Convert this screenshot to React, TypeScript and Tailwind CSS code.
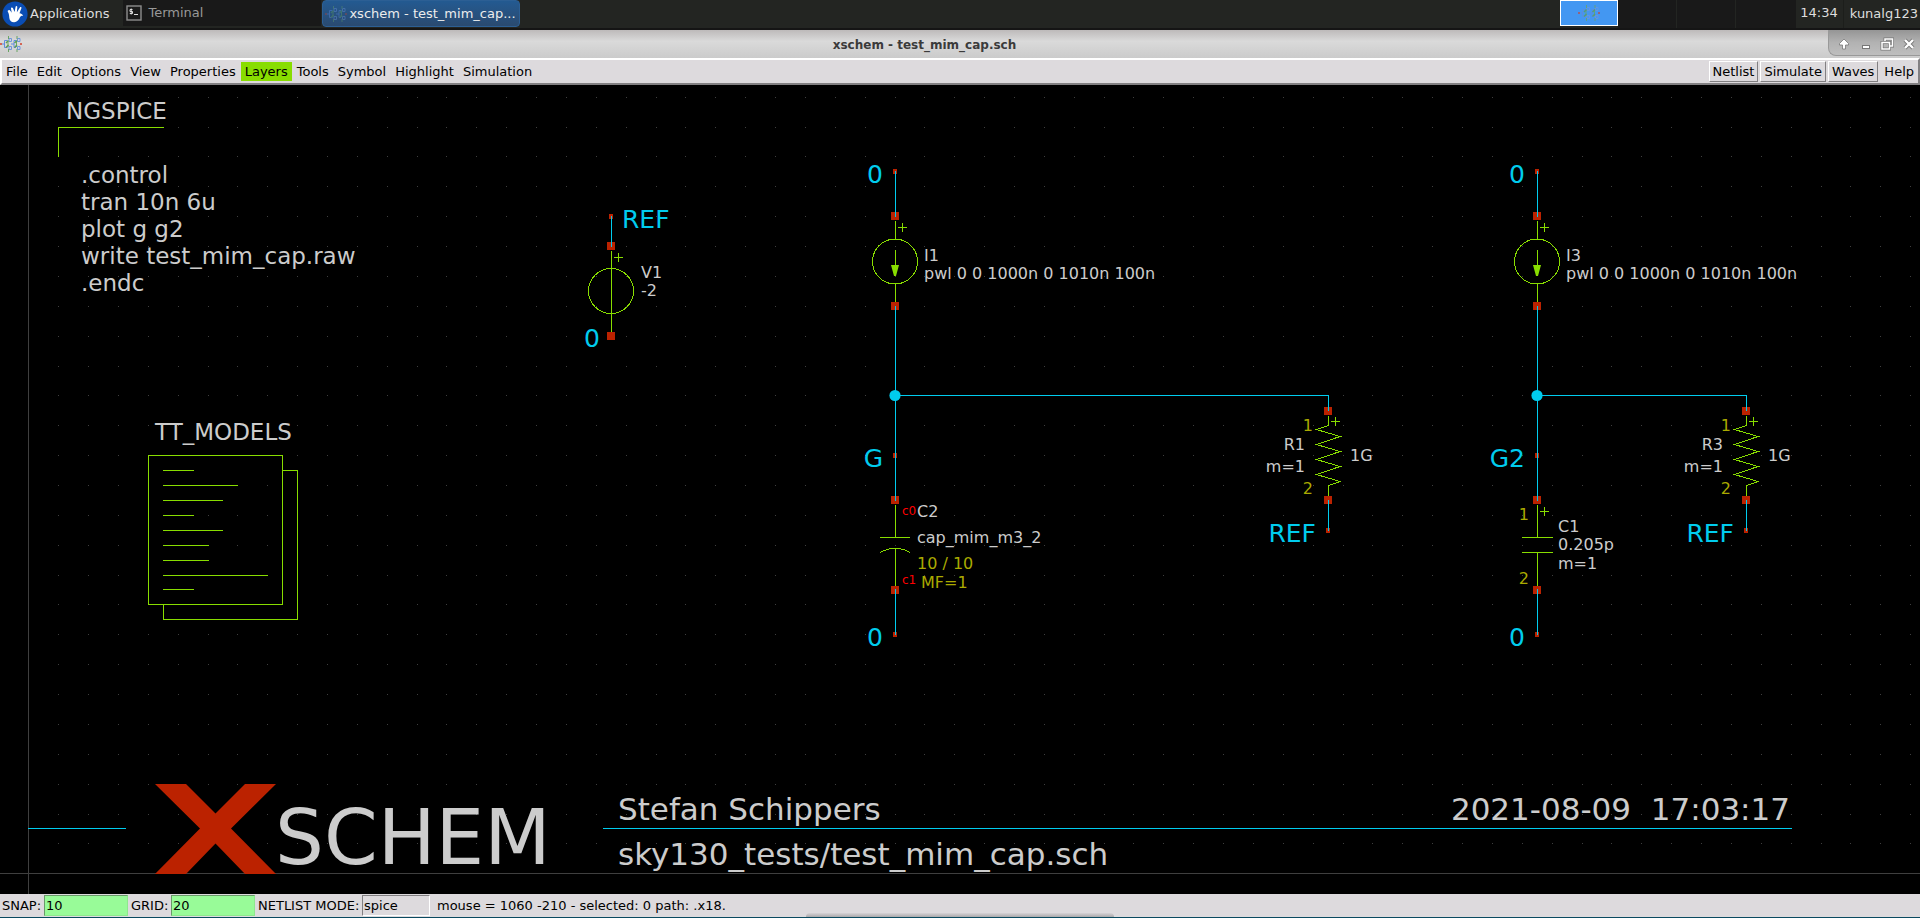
import React from "react";

const WIRE = "#00ccee";
const GRID = "#3f3f3f";
const TEXT = "#cccccc";
const SYMBOL = "#88dd00";
const PIN = "#bb2200";
const NOTE = "#aaaa00";
const PORT = "#ff0000";

const MENUS = ["File", "Edit", "Options", "View", "Properties", "Layers", "Tools", "Symbol", "Highlight", "Simulation"];
const ACTIONS = ["Netlist", "Simulate", "Waves"];

function XschemIcon({ className = "" }: { className?: string }) {
  return (
    <svg viewBox="0 0 22 16" className={`h-[16px] w-[22px] shrink-0 ${className}`} fill="none" aria-hidden="true">
      <path d="M0 8h2M20 8h2" stroke="#d0402c" strokeWidth="1.600" />
      <path d="M2 8h2M11 8h3M4.500 4.500v7M14 4.500v7M4.500 4.500h3M4.500 11.500h3M14 4.500h2M14 11.500h2" stroke="#5f8be0" strokeWidth="1" />
      <path d="M9 2.500h2.500v3H9zM9 10.500h2.500v3H9zM17.500 2.500H20v3h-2.500zM17.500 10.500H20v3h-2.500z" stroke="#6f95dd" strokeWidth="1" />
      <path d="M8.500 0v3M8.500 13v3M17 0v3M17 13v3M8 5v6M16.500 5v6" stroke="#6aa564" strokeWidth="1" />
      <path d="M6 7l2.500-2.500M6 11.500L8.500 9M14.500 7L17 4.500M14.500 11.500L17 9" stroke="#5c9e55" strokeWidth="1.400" />
    </svg>
  );
}

function XfceIcon() {
  return (
    <svg viewBox="0 0 26 26" className="h-[26px] w-[26px] shrink-0" aria-hidden="true">
      <circle cx="13" cy="13" r="12.6" fill="#0a4db4" />
      <path
        d="M6 9.5c.8-.9 1.900-.6 2.500.5l1.200 1.800L9 7.500c-.1-1.100 1.400-1.500 1.900-.4l1.700 4 1-5.300c.3-1 1.700-.9 1.700.2l-.4 5.200 3-4.700c.7-.9 1.900-.2 1.500.8l-1.900 5c1.700.2 3.600 1.400 3.600 2.600-1.600-.2-2.600.4-3.400 1.800-1.100 2.300-2.800 4.200-5.400 4.500-2.800.2-4.900-1.700-5-4.500-.1-1.800-.2-3.600-1.300-5.800-.4-.8-.4-1 0-1.400z"
        fill="#fff"
      />
    </svg>
  );
}

function TerminalIcon() {
  return (
    <svg viewBox="0 0 16 16" className="h-4 w-4 shrink-0" fill="none" aria-hidden="true">
      <rect x="1" y="1" width="14" height="14" fill="#1b1b1b" stroke="#8d8d8d" strokeWidth="1.4" />
      <path d="M6.500 4.500H4v2h2.500v2H3.800M5.200 3.500v6M8 9.500h4" stroke="#dedede" strokeWidth="1" />
    </svg>
  );
}

function TaskBar() {
  return (
    <header className="flex h-[30px] shrink-0 items-stretch border-b-2 border-[#151515] bg-[#232522] text-[13px] leading-[26px] text-[#dedede]">
      <button type="button" className="flex items-center gap-[2px] pl-[2px]">
        <XfceIcon />
        Applications
      </button>
      <button type="button" className="ml-[14px] flex h-[26px] w-[198px] items-center gap-[6px] bg-[#191919] pl-[3px] text-[#989898]">
        <TerminalIcon />
        Terminal
      </button>
      <button
        type="button"
        className="ml-px flex h-[27px] w-[198px] items-center gap-[2px] rounded-sm border border-[#2c5f94] bg-gradient-to-b from-[#235a91] to-[#2a4a70] pl-[2px] text-[#ececec]"
      >
        <XschemIcon className="opacity-40" />
        xschem - test_mim_cap...
      </button>
      <div className="ml-auto flex">
        <button type="button" aria-label="Workspace 1" className="flex h-[26px] w-[58px] items-center justify-center border border-white bg-[#4397f2]">
          <XschemIcon className="opacity-80" />
        </button>
        <button type="button" aria-label="Workspace 2" className="w-[59px] border-r border-[#232522] bg-[#191919]" />
        <button type="button" aria-label="Workspace 3" className="w-[59px] border-r border-[#232522] bg-[#191919]" />
        <button type="button" aria-label="Workspace 4" className="w-[60px] bg-[#191919]" />
        <time className="border-r border-[#1c1e1b] pl-1 pr-[5px]">14:34</time>
        <button type="button" className="pl-[6px] pr-[2px]">kunalg123</button>
      </div>
    </header>
  );
}

function TitleBar() {
  return (
    <div className="flex h-[28px] shrink-0 items-start bg-gradient-to-b from-[#bdbaba] via-[#dadada] via-40% to-[#cbcbcb]">
      <XschemIcon className="mt-[6px]" />
      <h1 className="flex-1 pr-px text-center text-[12px] font-bold leading-[30px] text-[#3b3b3b]">xschem - test_mim_cap.sch</h1>
      <div className="flex h-[26px] w-[92px] items-center justify-around rounded-bl-lg border-b border-l border-[#999999] bg-gradient-to-b from-[#959595] via-[#b2b2b2] to-[#bebebe] pl-1 pt-[2px]">
        <button type="button" aria-label="Shade">
          <svg viewBox="0 0 14 14" className="h-[14px] w-[14px]" aria-hidden="true">
            <path d="M7 2l4.500 4.500v1.500H8.500v4h-3V8H2.500V6.500z" fill="#fff" stroke="#777" strokeWidth=".8" />
          </svg>
        </button>
        <button type="button" aria-label="Minimize">
          <svg viewBox="0 0 14 14" className="h-[14px] w-[14px]" aria-hidden="true">
            <rect x="3.500" y="8.500" width="7" height="3" fill="#fff" stroke="#777" />
          </svg>
        </button>
        <button type="button" aria-label="Restore">
          <svg viewBox="0 0 14 14" className="h-[14px] w-[14px]" fill="none" aria-hidden="true">
            <path d="M5 4V2h7.500v7H10M2 5.500h7.500V12H2z" stroke="#777" strokeWidth="3" />
            <path d="M5 4V2h7.500v7H10M2 5.500h7.500V12H2z" stroke="#fff" strokeWidth="1.500" />
          </svg>
        </button>
        <button type="button" aria-label="Close">
          <svg viewBox="0 0 14 14" className="h-[14px] w-[14px]" fill="none" aria-hidden="true">
            <path d="M3 3l8 8M11 3l-8 8" stroke="#777" strokeWidth="4" />
            <path d="M3 3l8 8M11 3l-8 8" stroke="#fff" strokeWidth="2.400" />
          </svg>
        </button>
      </div>
    </div>
  );
}

function MenuBar() {
  return (
    <nav className="flex h-[27px] shrink-0 items-center gap-px border-2 border-b-[#828082] border-l-white border-r-[#828082] border-t-white bg-[#dddadd] text-[13px] leading-[19px] text-black">
      {MENUS.map((name) => (
        <button key={name} type="button" className={name === "Layers" ? "bg-[#88dd00] px-1" : "px-1"}>
          {name}
        </button>
      ))}
      <div className="ml-auto flex items-center gap-[2px]">
        {ACTIONS.map((name) => (
          <button
            key={name}
            type="button"
            className="border border-b-[#828082] border-l-white border-r-[#828082] border-t-white px-[3px]"
          >
            {name}
          </button>
        ))}
        <button type="button" className="px-1">Help</button>
      </div>
    </nav>
  );
}

type Line = [number, number, number, number];

function Lines({ items, color }: { items: Line[]; color: string }) {
  return (
    <path
      d={items.map(([x1, y1, x2, y2]) => `M${x1 + 0.5} ${y1 + 0.5}L${x2 + 0.5} ${y2 + 0.5}`).join("")}
      stroke={color}
      strokeLinecap="square"
      fill="none"
      shapeRendering="crispEdges"
    />
  );
}

function Pin({ x, y }: { x: number; y: number }) {
  return <rect x={x - 4} y={y - 4} width="8" height="8" fill={PIN} shapeRendering="crispEdges" />;
}

function Tap({ x, y }: { x: number; y: number }) {
  return <rect x={x - 2} y={y - 2} width="4" height="5" fill={PIN} shapeRendering="crispEdges" />;
}

function Plus({ x, y }: { x: number; y: number }) {
  return <Lines color={SYMBOL} items={[[x - 4, y, x + 4, y], [x, y - 4, x, y + 4]]} />;
}

interface LabelProps {
  x: number;
  y: number;
  size?: number;
  color?: string;
  end?: boolean;
  children: string;
}

function Label({ x, y, size = 16, color = TEXT, end = false, children }: LabelProps) {
  return (
    <text x={x} y={y} fontSize={size} fill={color} textAnchor={end ? "end" : "start"} xmlSpace="preserve">
      {children}
    </text>
  );
}

function Net({ x, y, end = true, children }: { x: number; y: number; end?: boolean; children: string }) {
  return (
    <Label x={x} y={y} size={25} color={WIRE} end={end}>
      {children}
    </Label>
  );
}

function CurrentSource({ x, name }: { x: number; name: string }) {
  return (
    <g>
      <Net x={x - 12} y={183}>0</Net>
      <Tap x={x} y={171} />
      <Pin x={x} y={216} />
      <Pin x={x} y={306} />
      <Lines color={WIRE} items={[[x, 171, x, 216], [x, 306, x, 395]]} />
      <Lines color={SYMBOL} items={[[x, 221, x, 239], [x, 250, x, 274], [x, 284, x, 301]]} />
      <circle cx={x} cy="261.500" r="22.500" fill="none" stroke={SYMBOL} shapeRendering="crispEdges" />
      <path d={`M${x - 4} 265h8l-3 11h-2z`} fill={SYMBOL} />
      <Plus x={x + 7} y={227} />
      <Label x={x + 29} y={261}>{name}</Label>
      <Label x={x + 29} y={279}>pwl 0 0 1000n 0 1010n 100n</Label>
    </g>
  );
}

function Resistor({ x, name }: { x: number; name: string }) {
  return (
    <g>
      <Pin x={x} y={411} />
      <Pin x={x} y={500} />
      <Tap x={x} y={530} />
      <Lines color={WIRE} items={[[x, 395, x, 410], [x, 500, x, 530]]} />
      <path
        d={`M${x + 0.5} 416V425.500L${x - 11.5} 429.500L${x + 12} 436.500L${x - 11.5} 444.500L${x + 12} 451.500L${x - 11.5} 459.500L${x + 12} 466.500L${x - 11.5} 474.500L${x + 12} 481.500L${x + 0.5} 485.500V496`}
        fill="none"
        stroke={SYMBOL}
        shapeRendering="crispEdges"
      />
      <Plus x={x + 7} y={421} />
      <Label x={x - 15} y={431} color={NOTE} end>1</Label>
      <Label x={x - 15} y={494} color={NOTE} end>2</Label>
      <Label x={x - 23} y={450} end>{name}</Label>
      <Label x={x - 23} y={472} end>m=1</Label>
      <Label x={x + 22} y={461}>1G</Label>
      <Net x={x - 12} y={542}>REF</Net>
    </g>
  );
}

function Branch({ x, net, to }: { x: number; net: string; to: number }) {
  return (
    <g>
      <Tap x={x} y={455} />
      <Pin x={x} y={500} />
      <Pin x={x} y={590} />
      <Tap x={x} y={634} />
      <Lines color={WIRE} items={[[x, 395, to, 395], [x, 395, x, 500], [x, 589, x, 634]]} />
      <circle cx={x} cy="395.500" r="5.600" fill={WIRE} />
      <Net x={x - 12} y={467}>{net}</Net>
      <Net x={x - 12} y={646}>0</Net>
    </g>
  );
}

function GridDots() {
  const pitch = 29.87;
  let d = "";
  for (let col = 1; col <= 63; col++) {
    for (let row = 1; row <= 26; row++) {
      d += `M${Math.floor(28.8 + col * pitch)} ${Math.floor(873.8 - row * pitch)}h1v1h-1z`;
    }
  }
  return <path d={d} fill={GRID} shapeRendering="crispEdges" />;
}

const SCRIPT = [".control", "tran 10n 6u", "plot g g2", "write test_mim_cap.raw", ".endc"];
const MODEL_LINES: Line[] = [
  [163, 470, 193, 470],
  [163, 485, 237, 485],
  [163, 500, 222, 500],
  [163, 515, 193, 515],
  [163, 530, 222, 530],
  [163, 545, 208, 545],
  [163, 560, 208, 560],
  [163, 575, 267, 575],
  [163, 589, 193, 589],
];

function Schematic() {
  return (
    <svg viewBox="0 85 1920 809" className="h-full w-full" role="img" aria-label="test_mim_cap schematic">
      <GridDots />
      <Lines color={GRID} items={[[28, 85, 28, 893], [0, 873, 1919, 873]]} />

      <Label x={66} y={119} size={23}>NGSPICE</Label>
      <Lines color={SYMBOL} items={[[58, 127, 163, 127], [58, 127, 58, 156]]} />
      {SCRIPT.map((line, i) => (
        <Label key={line} x={81} y={183 + i * 27} size={23}>{line}</Label>
      ))}

      <Label x={155} y={440} size={23}>TT_MODELS</Label>
      <Lines
        color={SYMBOL}
        items={[
          [148, 455, 282, 455],
          [148, 604, 282, 604],
          [148, 455, 148, 604],
          [282, 455, 282, 604],
          [282, 470, 297, 470],
          [297, 470, 297, 619],
          [163, 619, 297, 619],
          [163, 604, 163, 619],
          ...MODEL_LINES,
        ]}
      />

      <Tap x={611} y={216} />
      <Pin x={611} y={246} />
      <Pin x={611} y={336} />
      <Lines color={WIRE} items={[[611, 216, 611, 246]]} />
      <Lines color={SYMBOL} items={[[611, 251, 611, 331]]} />
      <circle cx="611" cy="291" r="22.500" fill="none" stroke={SYMBOL} shapeRendering="crispEdges" />
      <Plus x={618} y={257} />
      <Net x={622} y={228} end={false}>REF</Net>
      <Net x={600} y={347}>0</Net>
      <Label x={641} y={278}>V1</Label>
      <Label x={641} y={296}>-2</Label>

      <CurrentSource x={895} name="I1" />
      <Branch x={895} net="G" to={1328} />
      <Lines color={SYMBOL} items={[[895, 505, 895, 537], [880, 537, 909, 537], [895, 548, 895, 585]]} />
      <path d="M880 552.500Q895.500 544 910 552.500" fill="none" stroke={SYMBOL} shapeRendering="crispEdges" />
      <Label x={902} y={515} size={12} color={PORT}>c0</Label>
      <Label x={902} y={584} size={12} color={PORT}>c1</Label>
      <Label x={917} y={517}>C2</Label>
      <Label x={917} y={543}>cap_mim_m3_2</Label>
      <Label x={917} y={569} color={NOTE}>10 / 10</Label>
      <Label x={921} y={588} color={NOTE}>MF=1</Label>
      <Resistor x={1328} name="R1" />

      <CurrentSource x={1537} name="I3" />
      <Branch x={1537} net="G2" to={1746} />
      <Lines
        color={SYMBOL}
        items={[[1537, 505, 1537, 537], [1522, 537, 1552, 537], [1522, 552, 1552, 552], [1537, 552, 1537, 585]]}
      />
      <Plus x={1544} y={511} />
      <Label x={1529} y={520} color={NOTE} end>1</Label>
      <Label x={1529} y={584} color={NOTE} end>2</Label>
      <Label x={1558} y={532}>C1</Label>
      <Label x={1558} y={550}>0.205p</Label>
      <Label x={1558} y={569}>m=1</Label>
      <Resistor x={1746} name="R3" />

      <Lines color={WIRE} items={[[28, 828, 125, 828], [603, 828, 1791, 828]]} />
      <path
        d="M155 784H186L215.500 813.500L245 784H276L231 828.500L276 874H245L215.500 843.500L186 874H155L200 828.500Z"
        fill={PIN}
      />
      <Label x={275} y={864} size={77}>SCHEM</Label>
      <Label x={618} y={820} size={31}>Stefan Schippers</Label>
      <Label x={618} y={865} size={31}>sky130_tests/test_mim_cap.sch</Label>
      <Label x={1790} y={820} size={31} end>{"2021-08-09\u00a0 17:03:17"}</Label>
    </svg>
  );
}

function StatusBar() {
  const field =
    "h-[21px] border border-b-[#8de88d] border-l-[#6a9a6a] border-r-[#8de88d] border-t-[#6a9a6a] bg-[#98fb98] pl-px outline-none";
  return (
    <footer className="relative flex h-[24px] shrink-0 items-center overflow-hidden border-b border-[#0a4a60] bg-[#dddadd] pl-[2px] text-[13px] leading-[21px] text-black">
      <label htmlFor="snap" className="w-[42px]">SNAP:</label>
      <input id="snap" defaultValue="10" className={`${field} w-[84px]`} />
      <label htmlFor="grid" className="w-[43px] pl-[3px]">GRID:</label>
      <input id="grid" defaultValue="20" className={`${field} w-[84px]`} />
      <label htmlFor="mode" className="w-[107px] whitespace-nowrap pl-[3px]">NETLIST MODE:</label>
      <input
        id="mode"
        defaultValue="spice"
        className="h-[21px] w-[68px] border border-b-white border-l-[#828082] border-r-white border-t-[#828082] bg-[#dddadd] pl-px outline-none"
      />
      <output className="pl-[7px]">mouse = 1060 -210 - selected: 0 path: .x18.</output>
      <div className="absolute bottom-0 left-[42%] h-[4px] w-[16%] rounded-t-full bg-gradient-to-b from-[#d6d3d6] to-[#aaa8aa]" />
    </footer>
  );
}

export default function App() {
  return (
    <div className="flex h-screen flex-col overflow-hidden bg-black font-['DejaVu_Sans',sans-serif]">
      <TaskBar />
      <TitleBar />
      <MenuBar />
      <main className="min-h-0 flex-1 bg-black">
        <Schematic />
      </main>
      <StatusBar />
    </div>
  );
}
